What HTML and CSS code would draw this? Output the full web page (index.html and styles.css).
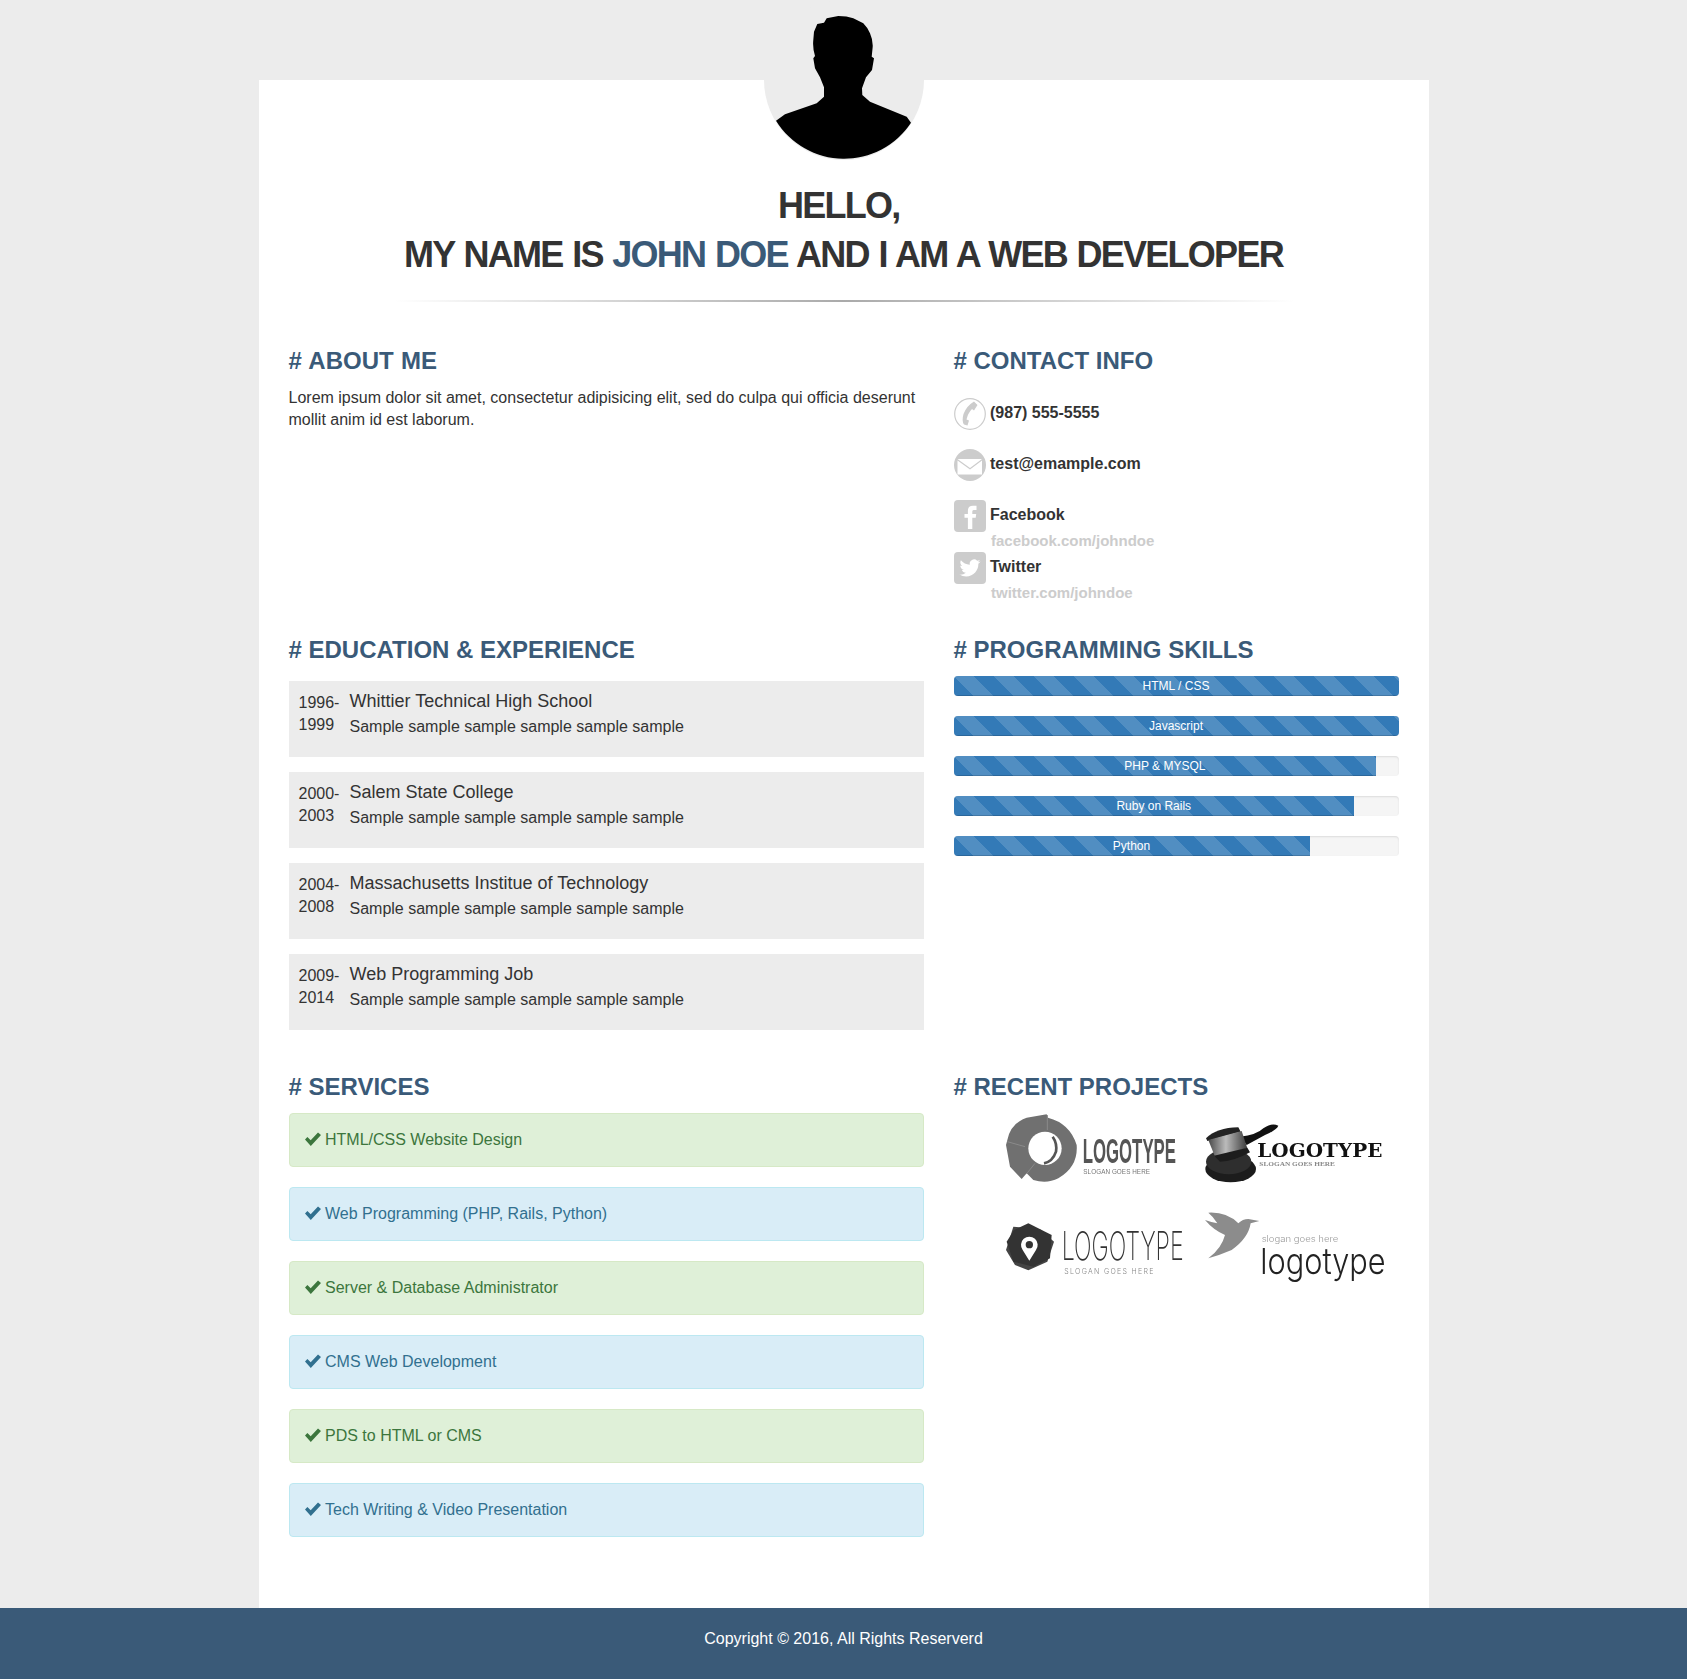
FILE: index.html
```html
<!DOCTYPE html>
<html lang="en">
<head>
    <meta charset="UTF-8">
    <meta name="viewport" content="width=device-width, initial-scale=1.0">
    <title>John Doe - Resume</title>
    <link rel="stylesheet" href="styles.css">
</head>
<body>

    <div class="card">

        <!-- Header -->
        <header class="intro">
            <svg class="avatar" viewBox="0 0 160 160">
                <circle cx="80" cy="80" r="80" fill="#ececec"/>
                <path fill="#000" d="M12 120.7 L21 114.3 L52.7 103.3 L60 96.7 L60 87.3 L56 77.3 L51 68.3 L49.3 58.3 L51 56 Q48.5 48 49.3 40 L50 31.7 L53.3 24 L60 22.7 L62.7 18.3 L74.3 16 Q83 16 89.3 18.3 L99.3 23.3 Q104 28 106 33.3 Q109 40 108.7 46.7 L107.7 56.7 L110 58.3 L108 70 L102 77.3 L98 88.3 L98.3 95 L106 101.7 L142.7 116.7 L147 122.7 A80 80 0 0 1 12 120.7 Z"/>
            </svg>
            <h1 class="title">HELLO,&nbsp;<br>MY NAME IS <span class="accent">JOHN DOE</span> AND I AM A WEB DEVELOPER</h1>
            <div class="rule"></div>
        </header>

        <!-- About and contact -->
        <section class="row row-about">
            <div>
                <h2 class="heading heading-about"># ABOUT ME</h2>
                <p class="about-text">Lorem ipsum dolor sit amet, consectetur adipisicing elit, sed do culpa qui officia deserunt mollit anim id est laborum.</p>
            </div>
            <div>
                <h2 class="heading"># CONTACT INFO</h2>
                <ul class="contact">
                    <li class="contact-item">
                        <svg class="contact-icon" viewBox="0 0 32 32">
                            <circle cx="16" cy="16" r="15.3" fill="none" stroke="#ccc" stroke-width="1.2"/>
                            <path fill="#ccc" d="M20 3.5 L23.5 7 L20 12.5 L18 11 Q14 15 12.5 21.5 L15 22.5 L13.5 27.5 L10 26.5 Q7.5 23 9.5 16 Q12.5 8 20 3.5 Z"/>
                        </svg>
                        <div class="contact-text"><strong>(987) 555-5555</strong></div>
                    </li>
                    <li class="contact-item">
                        <svg class="contact-icon" viewBox="0 0 32 32">
                            <circle cx="16" cy="16" r="16" fill="#ccc"/>
                            <path fill="#fff" d="M3.5 10 H28 L16 19 Z"/>
                            <path fill="#fff" d="M3.5 11.5 L16 20.5 L28 11.5 V25.5 H3.5 Z"/>
                        </svg>
                        <div class="contact-text"><strong>test@emample.com</strong></div>
                    </li>
                    <li class="contact-item">
                        <svg class="contact-icon" viewBox="0 0 32 32">
                            <rect width="32" height="32" rx="4" fill="#ccc"/>
                            <path fill="#fff" d="M22.5 10 H19.6 Q18.3 10 18.3 11.6 V14 H22.2 L21.7 17.7 H18.3 V29 H13.9 V17.7 H10.5 V14 H13.9 V11 Q13.9 5.8 18.8 5.8 H22.5 Z"/>
                        </svg>
                        <div class="contact-text">
                            <strong>Facebook</strong>
                            <a class="contact-link">facebook.com/johndoe</a>
                        </div>
                    </li>
                    <li class="contact-item">
                        <svg class="contact-icon" viewBox="0 0 32 32">
                            <rect width="32" height="32" rx="4" fill="#ccc"/>
                            <path fill="#fff" transform="translate(5.5 5.5) scale(.875)" d="M23.953 4.57a10 10 0 01-2.825.775 4.958 4.958 0 002.163-2.723c-.951.555-2.005.959-3.127 1.184a4.92 4.92 0 00-8.384 4.482C7.69 8.095 4.067 6.13 1.64 3.162a4.822 4.822 0 00-.666 2.475c0 1.71.87 3.213 2.188 4.096a4.904 4.904 0 01-2.228-.616v.06a4.923 4.923 0 003.946 4.827 4.996 4.996 0 01-2.212.085 4.936 4.936 0 004.604 3.417 9.867 9.867 0 01-6.102 2.105c-.39 0-.779-.023-1.17-.067a13.995 13.995 0 007.557 2.209c9.053 0 13.998-7.496 13.998-13.985 0-.21 0-.42-.015-.63A9.935 9.935 0 0024 4.59z"/>
                        </svg>
                        <div class="contact-text">
                            <strong>Twitter</strong>
                            <a class="contact-link">twitter.com/johndoe</a>
                        </div>
                    </li>
                </ul>
            </div>
        </section>

        <!-- Education and skills -->
        <section class="row row-edu">
            <div>
                <h2 class="heading"># EDUCATION &amp; EXPERIENCE</h2>
                <div class="timeline">
                    <div class="entry">
                        <div class="entry-years">1996-<br>1999</div>
                        <div>
                            <div class="entry-title">Whittier Technical High School</div>
                            <div class="entry-desc">Sample sample sample sample sample sample</div>
                        </div>
                    </div>
                    <div class="entry">
                        <div class="entry-years">2000-<br>2003</div>
                        <div>
                            <div class="entry-title">Salem State College</div>
                            <div class="entry-desc">Sample sample sample sample sample sample</div>
                        </div>
                    </div>
                    <div class="entry">
                        <div class="entry-years">2004-<br>2008</div>
                        <div>
                            <div class="entry-title">Massachusetts Institue of Technology</div>
                            <div class="entry-desc">Sample sample sample sample sample sample</div>
                        </div>
                    </div>
                    <div class="entry">
                        <div class="entry-years">2009-<br>2014</div>
                        <div>
                            <div class="entry-title">Web Programming Job</div>
                            <div class="entry-desc">Sample sample sample sample sample sample</div>
                        </div>
                    </div>
                </div>
            </div>
            <div>
                <h2 class="heading"># PROGRAMMING SKILLS</h2>
                <div class="skills">
                    <div class="progress"><div class="progress-bar" style="width: 100%">HTML / CSS</div></div>
                    <div class="progress"><div class="progress-bar" style="width: 100%">Javascript</div></div>
                    <div class="progress"><div class="progress-bar" style="width: 95%">PHP &amp; MYSQL</div></div>
                    <div class="progress"><div class="progress-bar" style="width: 90%">Ruby on Rails</div></div>
                    <div class="progress"><div class="progress-bar" style="width: 80%">Python</div></div>
                </div>
            </div>
        </section>

        <!-- Services and projects -->
        <section class="row row-services">
            <div>
                <h2 class="heading"># SERVICES</h2>
                <div class="services">
                    <div class="alert alert-success"><svg class="check" viewBox="0 0 16 14"><path d="M0 7.6 L2.4 5 L5.7 8.2 L13 .4 L16 3 L5.8 14 Z"/></svg>HTML/CSS Website Design</div>
                    <div class="alert alert-info"><svg class="check" viewBox="0 0 16 14"><path d="M0 7.6 L2.4 5 L5.7 8.2 L13 .4 L16 3 L5.8 14 Z"/></svg>Web Programming (PHP, Rails, Python)</div>
                    <div class="alert alert-success"><svg class="check" viewBox="0 0 16 14"><path d="M0 7.6 L2.4 5 L5.7 8.2 L13 .4 L16 3 L5.8 14 Z"/></svg>Server &amp; Database Administrator</div>
                    <div class="alert alert-info"><svg class="check" viewBox="0 0 16 14"><path d="M0 7.6 L2.4 5 L5.7 8.2 L13 .4 L16 3 L5.8 14 Z"/></svg>CMS Web Development</div>
                    <div class="alert alert-success"><svg class="check" viewBox="0 0 16 14"><path d="M0 7.6 L2.4 5 L5.7 8.2 L13 .4 L16 3 L5.8 14 Z"/></svg>PDS to HTML or CMS</div>
                    <div class="alert alert-info"><svg class="check" viewBox="0 0 16 14"><path d="M0 7.6 L2.4 5 L5.7 8.2 L13 .4 L16 3 L5.8 14 Z"/></svg>Tech Writing &amp; Video Presentation</div>
                </div>
            </div>
            <div>
                <h2 class="heading"># RECENT PROJECTS</h2>
                <div class="projects">
                    <!-- ring logo -->
                    <svg class="logo" viewBox="33 30 594 300">
                        <path fill="#707070" d="M48 150 L52 135 Q62 85 110 68 L170 58 L174 68 Q240 85 260 150 Q265 215 205 250 Q170 268 130 255 L110 235 L95 252 L60 215 Z"/>
                        <path fill="none" stroke="#8a8a8a" stroke-width="3" d="M52 140 L105 155 M172 60 L172 105 M110 236 L135 205"/>
                        <circle cx="165" cy="160" r="50" fill="#fff"/>
                        <path fill="none" stroke="#555" stroke-width="8" d="M188 125 Q202 145 198 170 Q188 200 162 205"/>
                        <text class="logo-bold" x="278" y="205" font-size="104" textLength="280" lengthAdjust="spacingAndGlyphs" fill="#555">LOGOTYPE</text>
                        <text class="logo-small" x="280" y="236" font-size="19" textLength="200" lengthAdjust="spacing" fill="#777">SLOGAN GOES HERE</text>
                    </svg>
                    <!-- gavel logo -->
                    <svg class="logo" viewBox="627 30 594 300">
                        <defs>
                            <linearGradient id="gavelHead" x1="0" y1="0" x2="1" y2="0">
                                <stop offset="0" stop-color="#4a4a4a"/>
                                <stop offset=".45" stop-color="#bbb"/>
                                <stop offset="1" stop-color="#3a3a3a"/>
                            </linearGradient>
                        </defs>
                        <ellipse cx="722" cy="222" rx="76" ry="40" fill="#1c1c1c"/>
                        <ellipse cx="716" cy="200" rx="68" ry="38" fill="#2e2e2e"/>
                        <path fill="#111" d="M750 125 Q800 120 820 100 Q845 82 865 92 Q860 105 825 120 L770 150 Z"/>
                        <path fill="#222" d="M648 130 Q680 98 745 97 L752 110 L652 138 Z"/>
                        <path fill="url(#gavelHead)" d="M655 135 L755 108 L772 160 L675 185 Z"/>
                        <path fill="#1c1c1c" d="M672 182 L772 158 L780 172 Q730 200 690 200 Z"/>
                        <text class="logo-serif" x="802" y="187" font-size="58" textLength="375" lengthAdjust="spacingAndGlyphs" fill="#111">LOGOTYPE</text>
                        <text class="logo-serif-small" x="808" y="213" font-size="19" textLength="227" lengthAdjust="spacingAndGlyphs" fill="#888">SLOGAN GOES HERE</text>
                    </svg>
                    <!-- pin logo -->
                    <svg class="logo" viewBox="33 330 594 300">
                        <path fill="#444" d="M48 465 L70 395 L150 403 L192 440 L172 500 L115 526 L75 510 Z"/>
                        <path fill="#333" d="M115 385 L185 420 L180 490 L130 515 L70 500 L50 440 L72 405 Z"/>
                        <path fill="#fff" fill-rule="evenodd" d="M118 497 L98 465 A25 25 0 1 1 138 465 Z M118 438 A11 11 0 1 0 118 460 A11 11 0 1 0 118 438 Z"/>
                        <text class="logo-thin" x="215" y="495" font-size="118" textLength="366" lengthAdjust="spacingAndGlyphs" fill="#333">LOGOTYPE</text>
                        <text class="logo-light" x="223" y="537" font-size="21" textLength="267" lengthAdjust="spacing" fill="#888">SLOGAN GOES HERE</text>
                    </svg>
                    <!-- bird logo -->
                    <svg class="logo" viewBox="627 330 594 300">
                        <path fill="#8c8c8c" d="M655 353 Q710 350 745 385 Q758 372 775 372 L808 378 L782 385 Q775 430 725 465 Q690 480 655 490 Q695 460 705 420 Q670 405 645 375 Q665 382 682 385 Q670 365 655 353 Z"/>
                        <text class="logo-light" x="815" y="442" font-size="26" textLength="230" lengthAdjust="spacingAndGlyphs" fill="#999">slogan goes here</text>
                        <text class="logo-light" x="811" y="537" font-size="108" textLength="376" lengthAdjust="spacingAndGlyphs" fill="#222">logotype</text>
                    </svg>
                </div>
            </div>
        </section>

    </div>

    <footer class="footer">Copyright © 2016, All Rights Reserverd</footer>

</body>
</html>
```

FILE: styles.css
```css
/* Page */
body {
    margin: 0;
    background-color: #ececec;
    color: #333;
    font-family: "Liberation Sans", Arial, sans-serif;
    font-size: 16px;
    line-height: 22px;
}

/* White sheet */
.card {
    display: flow-root;
    width: 1170px;
    height: 1528px;
    margin: 80px auto 0;
    background-color: #fff;
}

/* Header */
.intro {
    text-align: center;
}

.avatar {
    display: block;
    width: 160px;
    height: 160px;
    margin: -80px auto 0;
}

.title {
    margin: 21px 0 0;
    font-size: 36px;
    line-height: 49px;
    font-weight: bold;
    letter-spacing: -1.75px;
    word-spacing: 1.37px;
}

.accent {
    color: #3a5a78;
}

.rule {
    width: 900px;
    height: 2px;
    margin: 21px auto 0;
    background: linear-gradient(to right, transparent, #aaa, transparent);
}

/* Two column rows */
.row {
    display: grid;
    grid-template-columns: 635px 445px;
    column-gap: 30px;
    padding: 0 30px;
}

.row-about { margin-top: 46px; }
.row-edu { margin-top: 33px; }
.row-services { margin-top: 29px; }

.heading {
    margin: 0;
    color: #3a5a78;
    font-size: 24px;
    line-height: 26px;
    font-weight: bold;
}

.heading-about {
    word-spacing: .7px;
}

.about-text {
    margin: 13px 0 0;
}

/* Contact */
.contact {
    margin: 24px 0 0;
    padding: 0;
    list-style: none;
}

.contact-item {
    display: flex;
    gap: 4.5px;
    min-height: 32px;
    margin-bottom: 19px;
}

.contact-item:nth-child(3) {
    margin-bottom: 0;
    height: 52px;
}

.contact-item:nth-child(4) {
    margin-bottom: 0;
}

.contact-icon {
    display: block;
    width: 32px;
    height: 32px;
    flex: none;
}

.contact-text {
    padding-top: 4px;
}

.contact-text strong {
    display: block;
}

.contact-link {
    display: block;
    margin-top: 4px;
    margin-left: 1px;
    color: #ccc;
    font-size: 15px;
    font-weight: bold;
}

/* Education */
.timeline {
    margin-top: 18px;
}

.entry {
    display: flex;
    gap: 10px;
    height: 76px;
    margin-bottom: 15px;
    padding: 10px;
    box-sizing: border-box;
    background-color: #ececec;
}

.entry-years {
    width: 41px;
    flex: none;
    padding-top: 1px;
}

.entry-title {
    font-size: 18px;
    line-height: 20px;
}

.entry-desc {
    margin-top: 5px;
}

/* Skills */
.skills {
    margin-top: 13px;
}

.progress {
    height: 20px;
    margin-bottom: 20px;
    overflow: hidden;
    background-color: #f5f5f5;
    border-radius: 4px;
    box-shadow: inset 0 1px 2px rgba(0, 0, 0, .1);
}

.progress-bar {
    height: 20px;
    color: #fff;
    font-size: 12px;
    line-height: 20px;
    text-align: center;
    background-color: #337ab7;
    background-image: linear-gradient(45deg, rgba(255, 255, 255, .15) 25%, transparent 25%, transparent 50%, rgba(255, 255, 255, .15) 50%, rgba(255, 255, 255, .15) 75%, transparent 75%, transparent);
    background-size: 40px 40px;
    box-shadow: inset 0 -1px 0 rgba(0, 0, 0, .15);
}

/* Services */
.services {
    margin-top: 13px;
}

.alert {
    display: flex;
    align-items: center;
    gap: 4.5px;
    height: 54px;
    margin-bottom: 20px;
    padding: 0 15px;
    box-sizing: border-box;
    border: 1px solid transparent;
    border-radius: 4px;
}

.alert-success {
    color: #3c763d;
    background-color: #dff0d8;
    border-color: #d6e9c6;
}

.alert-info {
    color: #31708f;
    background-color: #d9edf7;
    border-color: #bce8f1;
}

.check {
    width: 16px;
    height: 14px;
    margin-top: -3px;
    flex: none;
    fill: currentColor;
}

/* Projects */
.projects {
    display: grid;
    grid-template-columns: 198px 198px;
    grid-auto-rows: 100px;
    margin: 5px 0 0 47.5px;
}

.logo {
    display: block;
    width: 198px;
    height: 100px;
    overflow: visible;
    filter: blur(.4px);
}

.logo-bold {
    font-family: "Liberation Sans", sans-serif;
    font-weight: bold;
}

.logo-small {
    font-family: "Liberation Sans", sans-serif;
}

.logo-serif {
    font-family: "DejaVu Serif", serif;
    font-weight: bold;
}

.logo-serif-small {
    font-family: "Liberation Serif", serif;
    font-weight: bold;
}

.logo-thin {
    font-family: "Inter", sans-serif;
    font-weight: 200;
}

.logo-light {
    font-family: "Inter", sans-serif;
    font-weight: 300;
}

/* Footer */
.footer {
    height: 71px;
    color: #fff;
    line-height: 62px;
    text-align: center;
    background-color: #3a5a78;
}
```
